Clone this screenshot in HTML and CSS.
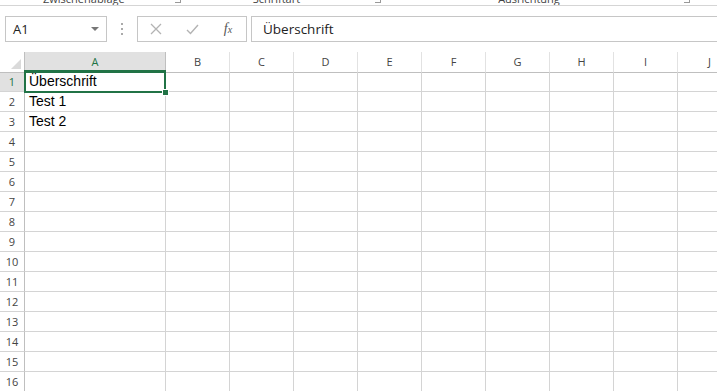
FILE: index.html
```html
<!DOCTYPE html>
<html lang="de">

<head>
    <meta charset="UTF-8">
    <title>Mappe1 - Excel</title>
    <link rel="stylesheet" href="styles.css">
</head>

<body>
    <!-- Unterkante der Multifunktionsleiste -->
    <div class="ribbon">
        <span class="grp g1">Zwischenablage</span>
        <span class="launch l1"></span>
        <span class="grp g2">Schriftart</span>
        <span class="launch l2"></span>
        <span class="grp g3">Ausrichtung</span>
        <span class="launch l3"></span>
    </div>

    <!-- Namenfeld und Bearbeitungsleiste -->
    <div class="fbar">
        <div class="namebox">
            <span>A1</span>
            <span class="arrow"></span>
        </div>
        <div class="grip"><i></i><i></i><i></i></div>
        <div class="btns">
            <span class="btn">
                <svg width="12" height="12" viewBox="0 0 12 12"><path d="M1 1L11 11M11 1L1 11" stroke="#b3b3b3" stroke-width="1.3" fill="none"/></svg>
            </span>
            <span class="btn">
                <svg width="13" height="11" viewBox="0 0 13 11"><path d="M1 6L4.5 9.5L12 1" stroke="#b3b3b3" stroke-width="1.4" fill="none"/></svg>
            </span>
            <span class="btn fx">f<sub>x</sub></span>
        </div>
        <div class="formula">Überschrift</div>
    </div>

    <!-- Tabellenblatt -->
    <div class="sheet">
        <div class="row head">
            <div class="corner"><span class="tri"></span></div>
            <div class="ch sel">A</div>
            <div class="ch">B</div>
            <div class="ch">C</div>
            <div class="ch">D</div>
            <div class="ch">E</div>
            <div class="ch">F</div>
            <div class="ch">G</div>
            <div class="ch">H</div>
            <div class="ch">I</div>
            <div class="ch">J</div>
        </div>
        <div class="row"><div class="rh sel">1</div><div class="c">Überschrift</div><div class="c"></div><div class="c"></div><div class="c"></div><div class="c"></div><div class="c"></div><div class="c"></div><div class="c"></div><div class="c"></div><div class="c"></div></div>
        <div class="row"><div class="rh">2</div><div class="c">Test 1</div><div class="c"></div><div class="c"></div><div class="c"></div><div class="c"></div><div class="c"></div><div class="c"></div><div class="c"></div><div class="c"></div><div class="c"></div></div>
        <div class="row"><div class="rh">3</div><div class="c">Test 2</div><div class="c"></div><div class="c"></div><div class="c"></div><div class="c"></div><div class="c"></div><div class="c"></div><div class="c"></div><div class="c"></div><div class="c"></div></div>
        <div class="row"><div class="rh">4</div><div class="c"></div><div class="c"></div><div class="c"></div><div class="c"></div><div class="c"></div><div class="c"></div><div class="c"></div><div class="c"></div><div class="c"></div><div class="c"></div></div>
        <div class="row"><div class="rh">5</div><div class="c"></div><div class="c"></div><div class="c"></div><div class="c"></div><div class="c"></div><div class="c"></div><div class="c"></div><div class="c"></div><div class="c"></div><div class="c"></div></div>
        <div class="row"><div class="rh">6</div><div class="c"></div><div class="c"></div><div class="c"></div><div class="c"></div><div class="c"></div><div class="c"></div><div class="c"></div><div class="c"></div><div class="c"></div><div class="c"></div></div>
        <div class="row"><div class="rh">7</div><div class="c"></div><div class="c"></div><div class="c"></div><div class="c"></div><div class="c"></div><div class="c"></div><div class="c"></div><div class="c"></div><div class="c"></div><div class="c"></div></div>
        <div class="row"><div class="rh">8</div><div class="c"></div><div class="c"></div><div class="c"></div><div class="c"></div><div class="c"></div><div class="c"></div><div class="c"></div><div class="c"></div><div class="c"></div><div class="c"></div></div>
        <div class="row"><div class="rh">9</div><div class="c"></div><div class="c"></div><div class="c"></div><div class="c"></div><div class="c"></div><div class="c"></div><div class="c"></div><div class="c"></div><div class="c"></div><div class="c"></div></div>
        <div class="row"><div class="rh">10</div><div class="c"></div><div class="c"></div><div class="c"></div><div class="c"></div><div class="c"></div><div class="c"></div><div class="c"></div><div class="c"></div><div class="c"></div><div class="c"></div></div>
        <div class="row"><div class="rh">11</div><div class="c"></div><div class="c"></div><div class="c"></div><div class="c"></div><div class="c"></div><div class="c"></div><div class="c"></div><div class="c"></div><div class="c"></div><div class="c"></div></div>
        <div class="row"><div class="rh">12</div><div class="c"></div><div class="c"></div><div class="c"></div><div class="c"></div><div class="c"></div><div class="c"></div><div class="c"></div><div class="c"></div><div class="c"></div><div class="c"></div></div>
        <div class="row"><div class="rh">13</div><div class="c"></div><div class="c"></div><div class="c"></div><div class="c"></div><div class="c"></div><div class="c"></div><div class="c"></div><div class="c"></div><div class="c"></div><div class="c"></div></div>
        <div class="row"><div class="rh">14</div><div class="c"></div><div class="c"></div><div class="c"></div><div class="c"></div><div class="c"></div><div class="c"></div><div class="c"></div><div class="c"></div><div class="c"></div><div class="c"></div></div>
        <div class="row"><div class="rh">15</div><div class="c"></div><div class="c"></div><div class="c"></div><div class="c"></div><div class="c"></div><div class="c"></div><div class="c"></div><div class="c"></div><div class="c"></div><div class="c"></div></div>
        <div class="row"><div class="rh">16</div><div class="c"></div><div class="c"></div><div class="c"></div><div class="c"></div><div class="c"></div><div class="c"></div><div class="c"></div><div class="c"></div><div class="c"></div><div class="c"></div></div>

        <!-- aktive Zelle A1 -->
        <div class="active"><span class="handle"></span></div>
    </div>
</body>

</html>
```

FILE: styles.css
```css
* {
    margin: 0;
    padding: 0;
    box-sizing: border-box;
}

html,
body {
    width: 717px;
    height: 391px;
    overflow: hidden;
    background-color: #fff;
}

body {
    font-family: "Liberation Sans", Arial, sans-serif;
    color: #000;
}

/* Multifunktionsleiste */
.ribbon {
    display: flex;
    align-items: flex-end;
    height: 6px;
    overflow: hidden;
    border-bottom: 1px solid #d5d5d5;
    font: 11px/12px "Open Sans", sans-serif;
    color: #444;
    white-space: nowrap;
}

.grp {
    flex: none;
}

.g1 {
    margin-left: 43px;
}

.g2 {
    margin-left: 72px;
}

.g3 {
    margin-left: 117px;
}

.launch {
    flex: none;
    width: 6px;
    height: 3px;
    border-right: 1px solid #999;
    border-bottom: 1px solid #999;
    margin-bottom: 2px;
}

.l1 {
    margin-left: 50px;
}

.l2 {
    margin-left: 75px;
}

.l3 {
    margin-left: 124px;
}

/* Bearbeitungsleiste */
.fbar {
    display: flex;
    height: 26px;
    margin-top: 10px;
    padding-left: 5px;
    font-family: "Open Sans", sans-serif;
}

.namebox {
    flex: none;
    width: 102px;
    display: flex;
    align-items: center;
    justify-content: space-between;
    padding: 0 6px 0 7px;
    border: 1px solid #c6c6c6;
    font-size: 13px;
    color: #222;
}

.arrow {
    width: 0;
    height: 0;
    border-left: 4px solid transparent;
    border-right: 4px solid transparent;
    border-top: 4px solid #777;
    margin-right: 1px;
}

.grip {
    flex: none;
    width: 30px;
    display: flex;
    flex-direction: column;
    align-items: center;
    justify-content: center;
    gap: 3px;
}

.grip i {
    display: block;
    width: 2px;
    height: 2px;
    background-color: #aaa;
}

.btns {
    flex: none;
    width: 110px;
    display: flex;
    border: 1px solid #c6c6c6;
}

.btn {
    width: 36px;
    display: flex;
    align-items: center;
    justify-content: center;
}

.fx {
    font: italic 14px "Liberation Serif", serif;
    color: #555;
}

.fx sub {
    font-size: 10px;
    vertical-align: -1px;
}

.formula {
    flex: 1;
    margin-left: 4px;
    margin-right: -4px;
    padding-left: 11px;
    border: 1px solid #c6c6c6;
    display: flex;
    align-items: center;
    font-size: 13.5px;
    color: #222;
}

/* Tabellenblatt */
.sheet {
    position: relative;
    margin-top: 10px;
}

.row {
    display: grid;
    grid-template-columns: 25px 141px repeat(9, 64px);
    height: 20px;
}

.row > div {
    border-bottom: 1px solid #d4d4d4;
    border-right: 1px solid #d4d4d4;
}

.row.head > div {
    border-bottom-color: #bfbfbf;
    font: 11px/19px "Open Sans", sans-serif;
    color: #444;
    text-align: center;
}

.row.head > .ch {
    border-right-color: #e2e2e2;
}

.row.head > .sel {
    background-color: #e1e1e1;
    color: #217346;
    border-bottom: 2px solid #217346;
    border-right-color: #bfbfbf;
}

.corner {
    position: relative;
    border-right-color: #bfbfbf !important;
}

.tri {
    position: absolute;
    right: 3px;
    bottom: 3px;
    width: 0;
    height: 0;
    border-left: 10px solid transparent;
    border-bottom: 10px solid #dadada;
}

.rh {
    font: 11px/19px "Open Sans", sans-serif;
    color: #444;
    text-align: center;
    border-right-color: #bfbfbf !important;
}

.rh.sel {
    background-color: #e1e1e1;
    color: #217346;
}

.c {
    padding: 0 4px;
    font-size: 14px;
    line-height: 19px;
    white-space: nowrap;
    overflow: hidden;
}

.active {
    position: absolute;
    left: 24px;
    top: 18px;
    width: 142px;
    height: 23px;
    border: 2px solid #217346;
}

.handle {
    position: absolute;
    right: -5px;
    bottom: -5px;
    width: 7px;
    height: 7px;
    background-color: #217346;
    border: 1px solid #fff;
}
```
